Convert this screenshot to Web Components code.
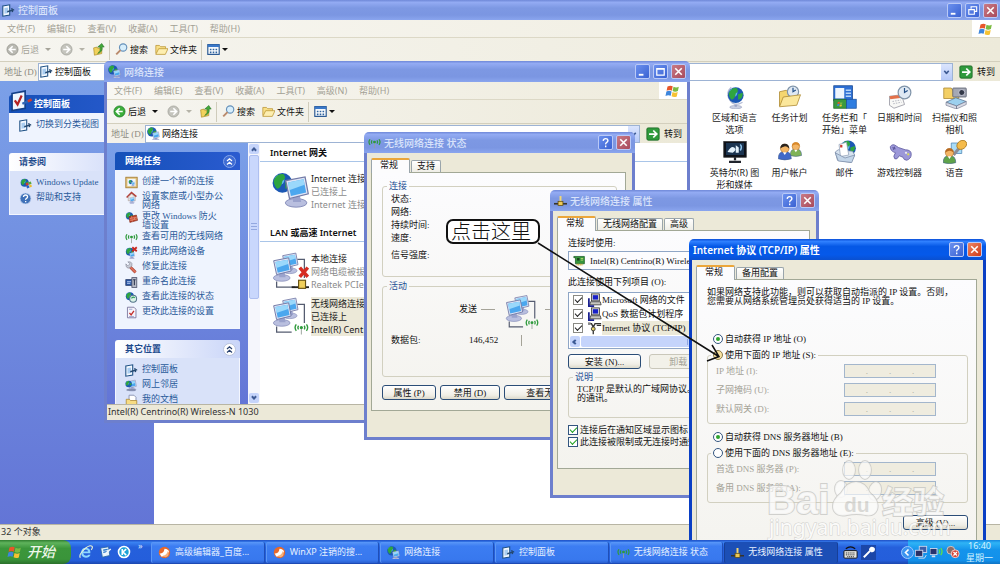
<!DOCTYPE html>
<html lang="zh-CN">
<head>
<meta charset="utf-8">
<meta name="viewport" content="width=device-width, initial-scale=1">
<title>控制面板</title>
<style>
  html, body { margin: 0; height: 100%; }
  body {
    display: flex; flex-direction: column; overflow: hidden; background: #fff; color: #111;
    --song: "Liberation Serif", "Noto Sans CJK SC", serif;
    --ui: "Noto Sans", "Noto Sans CJK SC", sans-serif;
    font: 9px/12px var(--ui);
  }
  main { flex: 1; min-height: 0; position: relative; overflow: hidden; display: flex; }
  main > xp-window:first-child { flex: 1; }
  .float { position: absolute; }
  #network { left: 104px; top: 61px; width: 586px; height: 362px; }
  #status { left: 364px; top: 132px; width: 271px; height: 308px; }
  #props { left: 550px; top: 190px; width: 269px; height: 308px; }
  #tcpip { left: 689px; top: 239px; width: 297px; height: 332px; }
</style>
</head>
<body>
<main>
  <xp-window caption="控制面板" icon="cpanel" buttons="min restore close" maximized>
    <xp-menubar items="文件(F) 编辑(E) 查看(V) 收藏(A) 工具(T) 帮助(H)"></xp-menubar>
    <xp-toolbar noback></xp-toolbar>
    <xp-address value="控制面板" icon="cpanel"></xp-address>
    <xp-explorer>
      <task-panel slot="side" caption="控制面板" primary badge="cpbig">
        <task-link icon="cpanel">切换到分类视图</task-link>
      </task-panel>
      <task-panel slot="side" caption="请参阅">
        <task-link icon="update">Windows Update</task-link>
        <task-link icon="help">帮助和支持</task-link>
      </task-panel>
      <icon-grid>
        <grid-item icon="region">区域和语言<br>选项</grid-item>
        <grid-item icon="sched">任务计划</grid-item>
        <grid-item icon="startmenu">任务栏和「<br>开始」菜单</grid-item>
        <grid-item icon="datetime">日期和时间</grid-item>
        <grid-item icon="scanner">扫描仪和照<br>相机</grid-item>
        <grid-item icon="intel">英特尔(R) 图<br>形和媒体</grid-item>
        <grid-item icon="users">用户帐户</grid-item>
        <grid-item icon="mail">邮件</grid-item>
        <grid-item icon="game">游戏控制器</grid-item>
        <grid-item icon="speech">语音</grid-item>
      </icon-grid>
    </xp-explorer>
    <xp-status>32 个对象</xp-status>
  </xp-window>

  <xp-window id="network" class="float" caption="网络连接" icon="net" buttons="min max close">
    <xp-menubar items="文件(F) 编辑(E) 查看(V) 收藏(A) 工具(T) 高级(N) 帮助(H)"></xp-menubar>
    <xp-toolbar></xp-toolbar>
    <xp-address value="网络连接" icon="net"></xp-address>
    <xp-explorer scroll>
      <task-panel slot="side" caption="网络任务" primary collapsible>
        <task-link icon="newconn">创建一个新的连接</task-link>
        <task-link icon="house">设置家庭或小型办公网络</task-link>
        <task-link icon="firewall">更改 Windows 防火<br>墙设置</task-link>
        <task-link icon="wifi">查看可用的无线网络</task-link>
        <task-link icon="disable">禁用此网络设备</task-link>
        <task-link icon="repair">修复此连接</task-link>
        <task-link icon="rename">重命名此连接</task-link>
        <task-link icon="viewstat">查看此连接的状态</task-link>
        <task-link icon="settings">更改此连接的设置</task-link>
      </task-panel>
      <task-panel slot="side" caption="其它位置" collapsible>
        <task-link icon="cpanel">控制面板</task-link>
        <task-link icon="places">网上邻居</task-link>
        <task-link icon="docs">我的文档</task-link>
      </task-panel>
      <conn-group caption="Internet 网关">
        <conn-item icon="gateway" name="Internet 连接" state="已连接上" device="Internet 连接"></conn-item>
      </conn-group>
      <conn-group caption="LAN 或高速 Internet">
        <conn-item icon="lan" name="本地连接" state="网络电缆被拔" device="Realtek PCIe"></conn-item>
        <conn-item icon="wlan" name="无线网络连接" state="已连接上" device="Intel(R) Cent" selected></conn-item>
      </conn-group>
    </xp-explorer>
    <xp-status>Intel(R) Centrino(R) Wireless-N 1030</xp-status>
  </xp-window>

  <xp-window id="status" class="float" caption="无线网络连接 状态" icon="wifi" buttons="help close">
    <status-page></status-page>
  </xp-window>

  <xp-window id="props" class="float" caption="无线网络连接 属性" icon="cable" buttons="help close">
    <props-page></props-page>
  </xp-window>

  <xp-window id="tcpip" class="float" caption="Internet 协议 (TCP/IP) 属性" buttons="help close" active>
    <tcpip-page></tcpip-page>
  </xp-window>

  <call-out>点击这里</call-out>
  <site-mark></site-mark>
</main>
<xp-taskbar></xp-taskbar>

<script>
/* ---------- icon drawings ---------- */
const globe = (x, y, r) => `<circle cx="${x}" cy="${y}" r="${r}" fill="#1c58b4"/><circle cx="${x - r * .3}" cy="${y - r * .3}" r="${r * .5}" fill="#5fb8ea"/><path d="M${x - r * .9} ${y - r * .2}q${r * .3} ${-r * .8} ${r} ${-r * .7}q${r * .4} ${r * .4} ${-r * .1} ${r * .7}q${-r * .1} ${r * .7} ${-r * .5} ${r * .8}q${-r * .3} ${-r * .2} ${-r * .4} ${-r * .8}zM${x + r * .3} ${y - r * .1}l${r * .6} ${-r * .2}q0 ${r * .8} ${-r * .6} ${r * .9}z" fill="#2fa53f"/>`;
const monitor = (x, y, s) => `<g transform="translate(${x} ${y}) scale(${s})"><ellipse cx="7" cy="15" rx="6" ry="2.4" fill="#b9bfdf" stroke="#8087b5" stroke-width=".5"/><path d="M5 11l4-.5.8 4h-4.5z" fill="#9aa2cc"/><path d="M1.200 2.600 12 .5l1.800 9.500-10.500 2.600z" fill="#dfe4f5" stroke="#727aa6" stroke-width=".7"/><path d="M2.500 3.600 11.200 1.900l1.400 7.300-8.500 2z" fill="#4ba7ee"/><path d="M2.500 3.600 11.200 1.900l.5 3-8.600 3z" fill="#9ad8fb"/></g>`;
const waves = (x, y, s, c = '#2f9a3c') => `<g transform="translate(${x} ${y}) scale(${s})" fill="none" stroke="${c}" stroke-width="1.500"><path d="M5 5.500q-1.500 2 0 4M2.500 4q-2.600 3.500 0 7M11 5.500q1.500 2 0 4M13.500 4q2.600 3.500 0 7"/><circle cx="8" cy="7.500" r="1" fill="${c}"/><path d="M8 9v6" stroke="#98a29a" stroke-width="1"/></g>`;
const person = (x, y, s, h, b) => `<g transform="translate(${x} ${y}) scale(${s})"><path d="M1 16q0-8 7-8t7 8q-7 2.500-14 0z" fill="${b}" stroke="#3c5a8c" stroke-width=".6"/><circle cx="8" cy="5" r="4.600" fill="#f3b565" stroke="#a76b25" stroke-width=".6"/><path d="M3.300 5q0-5 4.700-5t4.700 5q-2.500-2.500-5-2.200T3.300 5z" fill="${h}"/><path d="M6 9l2 3 2-3z" fill="#fff"/></g>`;
const flag = `<path d="M2.500 3.500q3-1.600 5.200-.2l-.9 4.400q-2.400-1.500-5.200.1z" fill="#e8562a"/><path d="M8.500 3.700q2.600 1.500 5.300.1l-.9 4.300q-2.800 1.400-5.300 0z" fill="#7cbb42"/><path d="M1.400 8.600q2.700-1.500 5.200-.1l-.9 4.300q-2.500-1.400-5.200.2z" fill="#3e86dc"/><path d="M7.500 9q2.500 1.500 5.200.1l-.9 4.300q-2.700 1.300-5.200-.1z" fill="#f6c233"/>`;
const panel = `<path d="M1 2.500 9.500 1v12.500L1 15z" fill="#f4f9ff" stroke="#1c4f83" stroke-width="1.300"/><path d="M3 5 7.500 4.200v7L3 12z" fill="#a9cdf0"/><path d="M6.500 9.500 15 7M12 5l1 5" stroke="#24486f" stroke-width="1.700" fill="none"/>`;
const circle = (f, s) => `<circle cx="8" cy="8" r="6.800" fill="${f}" stroke="${s}"/>`;
const clock = (x, y, r) => `<circle cx="${x}" cy="${y}" r="${r}" fill="#dfe9f4" stroke="#7f93a8" stroke-width="1.600"/><path d="M${x} ${y - r * .7}v${r * .7}l${r * .5} ${-r * .3}" stroke="#234f86" stroke-width="1.600" fill="none"/>`;
const pcPair = monitor(8, 0, 1.05) + monitor(0, 4, 1.2);
const arrowL = (c) => `<path d="M8.200 4 4.200 8l4 4M4.500 8h7.500" stroke="${c}" stroke-width="2" fill="none"/>`;
const arrowR = (c) => `<path d="M7.800 4l4 4-4 4M11.500 8H4" stroke="${c}" stroke-width="2" fill="none"/>`;
const ICONS = {
  cpanel: [16, panel],
  cpbig: [16, `<path d="M1.500 2.500 11 .8v12.500L1.500 15z" fill="#eef6ff" stroke="#123f88" stroke-width="1.200"/><path d="M3.500 7.500l2 3 3-6.500" stroke="#b42222" stroke-width="1.600" fill="none"/><path d="M9 10l6.500-3" stroke="#2d63b3" stroke-width="1.800"/><path d="M13 8.200l2.700-1.300" stroke="#cf3d2e" stroke-width="1.800"/>`],
  net: [16, globe(6, 6, 5.8) + monitor(6, 5.500, .68)],
  back: [16, circle('#3cae3a', '#1e7d25') + arrowL('#fff')],
  backoff: [16, circle('#b9b9b2', '#94948c') + arrowL('#fff')],
  fwd: [16, circle('#c4c4bd', '#a3a39b') + arrowR('#fff')],
  up: [16, `<path d="M2 6l4-1 1 1.500 5-1V13l-9 2z" fill="#f1d25c" stroke="#a98722" stroke-width=".8"/><path d="M7 13q4-3 3-8H7l5-4.500L15 5h-2.500q1 6-5.500 8z" fill="#42a83a" stroke="#1d6a1d" stroke-width=".6"/>`],
  search: [16, `<circle cx="10" cy="5.500" r="4.500" fill="#d7eefb" stroke="#6590b9" stroke-width="1.400"/><path d="M6.800 8.800 1.500 14" stroke="#b98a6c" stroke-width="2.400"/>`],
  folder: [16, `<path d="M1 13V3h4.500L7 4.500h6v2.500" fill="#f8df86" stroke="#b8912d" stroke-width=".9"/><path d="M1 14 4.500 7H16l-3.300 7z" fill="#fdeeb0" stroke="#b8912d" stroke-width=".9"/>`],
  views: [16, `<rect x="1" y="2" width="14" height="12" fill="#fff" stroke="#20528f" stroke-width="1.400"/><path d="M1 3.500h14" stroke="#3a78c8" stroke-width="3"/><path d="M3.500 8h2M7 8h2M10.500 8h2M3.500 11.500h2M7 11.500h2M10.500 11.500h2" stroke="#2e64a0" stroke-width="2"/>`],
  go: [16, `<rect x="1" y="1" width="14" height="14" rx="1.500" fill="#2f9a3c" stroke="#1e6a28"/><path d="M3.500 8H12M8.300 4l4 4-4 4" stroke="#fff" stroke-width="2" fill="none"/>`],
  flag: [16, flag],
  update: [16, globe(7, 7, 5) + `<path d="M8 8l3-1.200 1 2.700-3 1.200z" fill="#d23a2a"/><path d="M11.500 6.500l3-.9 1 2.600-3 1.300z" fill="#59a740"/><path d="M9 11.500l3-1.200 1 2.700-3 1.200z" fill="#2b62c4"/><path d="M12.500 10l2.500-.9 1 2.600-2.600 1.200z" fill="#eebb2e"/>`],
  help: [16, `<circle cx="8" cy="8" r="6.800" fill="#3f71b8" stroke="#cfdef6"/><path d="M5.500 6.200q.2-2.500 2.600-2.500t2.500 2.200q0 1.300-1.300 2T8.200 9.700M8.200 11v1.700" stroke="#fff" stroke-width="1.600" fill="none"/>`],
  newconn: [16, `<rect x="1" y="1.500" width="14" height="13" fill="#e3c47e" stroke="#a1782d"/><rect x="3" y="3.500" width="10" height="9" fill="#eef6fb"/>` + globe(7, 7.500, 2.500) + monitor(7.500, 7, .33)],
  house: [16, `<path d="M2 8l6-6 6 5" stroke="#b3413a" stroke-width="2" fill="none"/><path d="M4 7.500 8 3.700l4.500 3.500V12H4z" fill="#f7f0ea" stroke="#8f837c" stroke-width=".6"/>` + monitor(5, 7, .5)],
  firewall: [16, globe(5.500, 6, 4.500) + `<path d="M5 7l9-2 1.500 6.500L6 14z" fill="#c1442b" stroke="#79200f" stroke-width=".7"/><path d="M5.500 9.500l9.500-2M6 11.500l9.500-2M8 6.500l.5 2.200M11.500 8.300l.5 2M8.500 11l.5 2" stroke="#f0b09a" stroke-width=".7"/>`],
  wifi: [16, waves(0, 0, 1)],
  disable: [16, globe(6, 7, 5) + monitor(5, 7.500, .5) + `<path d="M9 1.500l5.500 5M14.500 1.500 9 6.500" stroke="#c8281e" stroke-width="2.200"/>`],
  repair: [16, `<path d="M5.500 6.500 13 14" stroke="#a84739" stroke-width="3.600"/><path d="M5.500 6.500 13 14" stroke="#e0705a" stroke-width="2"/><path d="M1 3.500 3.500 6 6 3.500 3.500 1q4-.8 5 2T6.500 8 1.500 7z" fill="#c9ccd6" stroke="#6c7083" stroke-width=".6"/>`],
  rename: [16, `<rect x="1" y="4.500" width="9" height="7" fill="#2a57a6" stroke="#253a68"/><path d="M2.500 7h5M2.500 9h4" stroke="#cfe2ff"/><rect x="8.500" y="2" width="6" height="12" fill="#b8bcc9" stroke="#4a5068"/><path d="M10 4.500h3M11.500 4.500v7" stroke="#27304c" stroke-width="1.300"/>`],
  viewstat: [16, globe(6, 6.500, 5) + `<circle cx="10" cy="9.500" r="4.300" fill="#d9f1e6" stroke="#55768b" stroke-width="1.300"/><path d="M8 9q2-2.500 4-.5" stroke="#2e9b59" stroke-width="1.600" fill="none"/>`],
  settings: [16, `<path d="M3 1.500h8l2.500 2.500v10.500H3z" fill="#f6f4fb" stroke="#6f6a94"/><path d="M5.500 8.500l2 2.500 3.500-5" stroke="#c22e2a" stroke-width="1.600" fill="none"/><path d="M5 4h4M5 13h6" stroke="#8d9ac7"/>`],
  places: [16, monitor(3, 1, .8) + globe(4.500, 6, 4) + `<path d="M2 13.500h11" stroke="#6d7a99" stroke-width="1.600"/>`],
  docs: [16, `<path d="M5 1.500h6l2.500 2.500v8H5z" fill="#fff" stroke="#7c86a8"/><path d="M1.500 14V6.500h4l1.200 1.500h7.800v6z" fill="#f7dc83" stroke="#a8842c" stroke-width=".9"/>`],
  cable: [16, `<path d="M8 2.500v7" stroke="#f2d774" stroke-width="2.400"/><path d="M0 12h16" stroke="#37332a" stroke-width="2"/><rect x="5" y="9" width="6" height="5" fill="#efca56" stroke="#5c4a12" stroke-width=".9"/>`],
  card: [16, `<path d="M1 3h13v9H3V4.500H1z" fill="#36963c" stroke="#185a22" stroke-width=".9"/><rect x="5" y="5" width="3" height="3" fill="#173c1b"/><path d="M9.500 5.500h3M9.500 7.500h3" stroke="#c9e07a"/><path d="M5 12v2M7 12v2M9 12v2M11 12v2" stroke="#d6b540" stroke-width="1.300"/>`],
  client: [16, `<rect x="4" y="1" width="9" height="8" fill="#d6d5d0" stroke="#333" stroke-width=".9"/><rect x="5.500" y="2.500" width="6" height="5" fill="#1820c8"/><path d="M3 10h11l1 3.500H2z" fill="#c8c7c1" stroke="#333" stroke-width=".9"/><path d="M1 6v9h6" stroke="#1a2090" stroke-width="2" fill="none"/>`],
  proto: [16, `<path d="M1 3h3l2 4 2-4h7" stroke="#333" stroke-width="1.600" fill="none"/><circle cx="6" cy="9" r="2.200" fill="#e7d367" stroke="#333"/><path d="M6 11v4M10 5h5" stroke="#333" stroke-width="1.500"/><rect x="0" y="1.500" width="3" height="3" fill="#888"/>`],
  ie: [16, `<path d="M13 9.500H4.800q.2 2.700 3.200 2.800 2 0 2.700-1.200h2.500Q11.800 14.500 8 14.500 2.500 14 2.500 8.500T8 3q5.500.3 5 6.500zM5 7.300h5.500Q10 5 7.800 5T5 7.300z" fill="#8fd6ff"/><path d="M1.500 14.500Q-.5 11 6 5t9-3.300q1 1-1 3.800" stroke="#e9f2d4" stroke-width="1.300" fill="none"/>`],
  desk: [16, `<path d="M3 3.500 12 2l1.500 10L5 14z" fill="#e6f3fb" stroke="#2a67a8"/><path d="M6 6l5-1M6 8.500l4-1" stroke="#2d7acb" stroke-width="1.500"/><path d="M7 11.500l7.500-7" stroke="#f2f7fb" stroke-width="1.600"/>`],
  kball: [16, `<circle cx="8" cy="8" r="6.300" fill="#1da3d8" stroke="#fff" stroke-width="1.800"/><path d="M6 4.500v7M10.500 4.700 6.800 8l3.700 3.500" stroke="#fff" stroke-width="1.800" fill="none"/>`],
  browser: [16, `<circle cx="8" cy="8" r="7" fill="#e8682a"/><path d="M2 9q5 1 6-5.500 5 .5 5.500 3.500Q10 13.500 4 13z" fill="#fff"/><path d="M6 12q5-1 6-6 2.500 4-.5 7-3 2-5.500-1z" fill="#f6b27e"/>`],
  keyboard: [16, `<rect x="1" y="6" width="14" height="8" rx="1" fill="#e6e6e2" stroke="#111"/><path d="M3 8.500h10M3 10.500h10M4.500 12.500h7" stroke="#222" stroke-dasharray="1.200 .8"/><path d="M3 4q5-4 10 0" stroke="#111" fill="none" stroke-width="1.200"/>`],
  pen: [16, `<path d="M3 13 10 6" stroke="#fff" stroke-width="2.200"/><path d="M9 3.500q2-2.500 4.500-1t.5 4.500l-2.500 1L8.500 5z" fill="#fff"/>`],
  traynet: [16, `<rect x="6" y="1.500" width="8.500" height="7" fill="#3c5ea8" stroke="#cfd7ec"/><rect x="1.500" y="6" width="8.500" height="7" fill="#2a2f63" stroke="#cfd7ec"/><path d="M5 15h7l2-3.500" stroke="#e3e3ee" fill="none"/>`],
  traywifi: [16, `<rect x="0" y="4" width="8" height="7" fill="#27336d" stroke="#d5dcee"/><path d="M2 13h4" stroke="#d5dcee" stroke-width="2"/><path d="M10 5q2 2.500 0 5M12.300 3.500q3 4 0 8" stroke="#5fe04a" stroke-width="1.500" fill="none"/>`],
  traybad: [16, `<circle cx="5.500" cy="6" r="4.500" fill="#8b6c66" stroke="#d8ccc8"/><circle cx="10.500" cy="10" r="4.500" fill="#d4473a" stroke="#f3d9d3"/><path d="M8.500 8l4 4M12.500 8l-4 4" stroke="#fff" stroke-width="1.400"/>`],
  /* 32-unit drawings */
  region: [32, `<ellipse cx="17" cy="29.500" rx="8" ry="2.300" fill="#c9cfe2" stroke="#8a92b4" stroke-width=".7"/><path d="M17 25v4" stroke="#9ba3c4" stroke-width="3"/><path d="M11 3q-8 7-2 17t17 3" stroke="#b7bed6" stroke-width="1.800" fill="none"/>` + globe(17, 13.500, 10.5)],
  sched: [32, `<path d="M2 28V9l9-2 3 3h10v6" fill="#f5d66f" stroke="#a9842b"/>` + clock(20, 9, 7.500) + `<path d="M2 29l5-13 23-3-5 14z" fill="#fbe79b" stroke="#a9842b"/>`],
  startmenu: [32, `<rect x="1" y="1" width="25" height="20" fill="#2d6fd4" stroke="#16458f"/><rect x="3" y="4" width="12" height="14" fill="#eef5fd"/><path d="M17 7h7M17 11h7M17 15h7" stroke="#b3d3f7" stroke-width="2"/><rect x="1" y="19" width="17" height="12" fill="#3b9a3f" stroke="#1f6427"/><rect x="18" y="19" width="13" height="12" fill="#2f7de0" stroke="#1a50a0"/><g transform="translate(5 21) scale(.55)">${flag}</g>`],
  datetime: [32, `<path d="M2 15l16-2 4 13-14 5-6-4z" fill="#f8f8f6" stroke="#8f8f9b"/><path d="M2 15l16-2 1 4-16 2z" fill="#e3714a"/><path d="M6 22l11-2M7 25l11-2" stroke="#b8bac4" stroke-dasharray="2 1.500" stroke-width="1.500"/>` + clock(22, 10, 8.500)],
  scanner: [32, `<path d="M1 18V4h10l2 3h8v11z" fill="#f3cf65" stroke="#a9842b"/><rect x="13" y="4" width="18" height="12" rx="1" fill="#a4a8b4" stroke="#53586a"/><circle cx="25" cy="10" r="4" fill="#333948" stroke="#dde"/><path d="M4 23l13-6 14 5-13 6z" fill="#9cd0ee" stroke="#5b7390"/><path d="M4 23v4l14 5v-4zM18 28v4l13-6v-4z" fill="#d8dbe6" stroke="#6c7288" stroke-width=".8"/>`],
  intel: [32, `<rect x="1" y="2" width="30" height="21" fill="#0d1118" stroke="#333"/><rect x="4" y="4" width="24" height="16" fill="#1b3450"/><path d="M6 16q5-9 9-6t-2 7M17 17V7l4 3v7z" fill="#e4f1fa"/><path d="M23 6q3 3 0 8" stroke="#8fc4ec" stroke-width="2" fill="none"/><path d="M16 23v4M8 29h16" stroke="#20242c" stroke-width="3"/>`],
  users: [32, person(15, 3, 1.100, '#d9892a', '#7fb356') + person(-1, 5, 1.250, '#2b241e', '#4169c8')],
  mail: [32, globe(20, 11, 10.5) + `<path d="M3 16l4-3 19 2 3 5-5 10-18-3z" fill="#d7e3f0" stroke="#7b8ca8"/><path d="M8 6l10-3 3 17-11 2z" fill="#fff" stroke="#93a1b8"/><rect x="9.500" y="6.500" width="3" height="3.500" fill="#c93c33"/><path d="M3 17l13 7 13-4-4 10-18-2z" fill="#c3d5e8" stroke="#7b8ca8"/>`],
  game: [32, `<path d="M3 9q3-5 8-1l3 2 9 3q8 0 8 6t-6 8q-4 0-5-4l-5-2q-3 6-6 4-3-3 1-8-7-2-7-8z" fill="#9c98d8" stroke="#5a569c"/><circle cx="24" cy="17" r="1.500" fill="#eee"/><circle cx="27" cy="19" r="1.500" fill="#dfe04c"/><path d="M6 10l4 2M9 9l-2 4" stroke="#5a569c" stroke-width="1.500"/>`],
  speech: [32, `<path d="M11 4h14v14H11z" fill="#a9dcf7" stroke="#4c84b4"/><path d="M14 20l9-11" stroke="#8b8d98" stroke-width="4"/><ellipse cx="25" cy="6.500" rx="7" ry="5.500" transform="rotate(-35 25 6.500)" fill="#f5bb4a" stroke="#a77518"/>` + person(-1, 11, 1.200, '#b66a22', '#5fa34a')],
  gateway: [32, globe(9, 9, 8.5) + monitor(10, 3, 1.55)],
  lan: [32, pcPair + `<path d="M22 6h6v16M4 25v5h16" stroke="#555c70" stroke-width="1.100" fill="none"/><path d="M17 30h15" stroke="#222" stroke-width="1.600"/><rect x="23" y="24" width="6" height="7" fill="#f0cf5c" stroke="#6a5313"/><path d="M24 13l7 8M31 13l-7 8" stroke="#d62c22" stroke-width="3"/>`],
  wlan: [32, pcPair + `<path d="M22 6h6v16M4 25v5h13" stroke="#555c70" stroke-width="1.100" fill="none"/>` + waves(19, 20, .8)],
};

/* ---------- element helper ---------- */
const BASE = `*{box-sizing:border-box;margin:0}:host{display:block;box-sizing:border-box}button,input{font:inherit;color:inherit;padding:0;border:0;background:none;border-radius:0;min-width:0}`;
function element(name, css, html) {
  customElements.define(name, class extends HTMLElement {
    constructor() {
      super();
      this.attachShadow({ mode: 'open' });
    }
    connectedCallback() {
      const t = document.createElement('template');
      const a = (k, d = '') => this.getAttribute(k) ?? d;
      t.innerHTML = `<style>${BASE}${css}</style>` + (typeof html === 'function' ? html(a, this) : html);
      this.shadowRoot.replaceChildren(t.content.cloneNode(true));
    }
  });
}

element('xp-icon', `:host{display:block;flex:none;width:13px;height:13px}svg{display:block;width:100%;height:100%}`, a => {
  const [n, d] = ICONS[a('name')];
  return `<svg viewBox="0 0 ${n} ${n}" aria-hidden="true">${d}</svg>`;
});

/* ---------- window frame ---------- */
const CAPS = {
  min: ['最小化', '<path d="M3 10.500h5" stroke="#fff" stroke-width="2"/>'],
  max: ['最大化', '<path d="M3 4h8v7H3zM3 4.500h8" stroke="#fff" fill="none" stroke-width="1.300"/>'],
  restore: ['还原', '<path d="M5.500 5V3h6v5H9M3 6h6v5H3z" stroke="#fff" fill="none" stroke-width="1.200"/>'],
  help: ['帮助', '<path d="M4.500 5.200q.3-2.400 2.600-2.400t2.500 2q0 1.300-1.300 2T7.200 9M7.200 10.300v1.700" stroke="#fff" fill="none" stroke-width="1.500"/>'],
  close: ['关闭', '<path d="M3.500 3.500l7 7M10.500 3.500l-7 7" stroke="#fff" stroke-width="1.700"/>'],
};
element('xp-window', `
  :host{display:flex;flex-direction:column;min-width:0;--edge:#6d7fcd;--bar:linear-gradient(#6f88d8,#93abf3 12%,#7d98e3 40%,#7b96e2 75%,#8aa5ee)}
  :host([active]){--edge:#0a3fc4;--bar:linear-gradient(#0b4fd8,#2f80ff 12%,#0558e6 35%,#0559ea 75%,#0a50d0)}
  header{display:flex;align-items:center;gap:3px;height:21px;padding:0 4px;background:var(--bar);color:#d9e3fb;border-radius:5px 5px 0 0;flex:none}
  :host([maximized]) header{height:20px;border-radius:0;padding:0 2px}
  h2{font:500 10px/14px var(--ui);flex:1;white-space:nowrap}
  :host([active]) h2{color:#fff;font-weight:600}
  .caps{display:flex;gap:3px}
  button{width:15px;height:15px;border-radius:2px;border:1px solid #b9c9f7;background:linear-gradient(135deg,#6b90ee,#3a62d2);display:block}
  .close{background:linear-gradient(135deg,#c97a85,#a84a5c)}
  :host([active]) .close{background:linear-gradient(135deg,#ee8664,#cf3a17)}
  svg{display:block;width:13px;height:13px}
  .body{flex:1;min-height:0;display:flex;flex-direction:column;border:3px solid var(--edge);border-top:0;background:#ece9d8}
  :host([maximized]) .body{border:0}`,
  a => `<header>${a('icon') ? `<xp-icon name="${a('icon')}"></xp-icon>` : ''}<h2>${a('caption')}</h2><div class="caps">${
    a('buttons').split(' ').map(b => `<button class="${b}" aria-label="${CAPS[b][0]}"><svg viewBox="0 0 14 14">${CAPS[b][1]}</svg></button>`).join('')
  }</div></header><div class="body"><slot></slot></div>`);

element('xp-menubar', `
  :host{flex:none}
  nav{display:flex;height:18px;align-items:center;padding-left:7px;gap:12px;background:linear-gradient(90deg,#f8f7f3,#eeebdc);border-bottom:1px solid #dcd8c6;color:#a3a195}
  button{white-space:nowrap}
  .logo{margin-left:auto;width:28px;height:17px;background:#fff;display:grid;place-items:center}
  xp-icon{width:16px;height:16px}`,
  a => `<nav>${a('items').split(' ').map(m => `<button>${m}</button>`).join('')}<span class="logo"><xp-icon name="flag"></xp-icon></span></nav>`);

element('xp-toolbar', `
  :host{flex:none}
  div{display:flex;align-items:center;height:24px;padding-left:6px;background:linear-gradient(90deg,#f6f5f0,#edeada);border-bottom:1px solid #d3cfbd}
  button{display:flex;align-items:center;gap:2px;height:18px;margin-right:7px;white-space:nowrap}
  .first{margin-right:9px}
  :host([noback]) .first{color:#a6a49a}
  i{border:3px solid transparent;border-top-color:currentColor;border-bottom:0;margin:0 0 0 4px}
  .dim{color:#b5b3a8}
  hr{width:1px;height:20px;border:0;background:#cfccbb;margin:0 5px 0 -3px}
  .views i{margin-left:0}`,
  (a, el) => `<div>
    <button class="first"><xp-icon name="${el.hasAttribute('noback') ? 'backoff' : 'back'}"></xp-icon>后退<i></i></button>
    <button class="dim" aria-label="前进"><xp-icon name="fwd"></xp-icon><i></i></button>
    <button aria-label="向上"><xp-icon name="up"></xp-icon></button><hr>
    <button><xp-icon name="search"></xp-icon>搜索</button>
    <button><xp-icon name="folder"></xp-icon>文件夹</button><hr>
    <button class="views" aria-label="查看方式"><xp-icon name="views"></xp-icon><i></i></button></div>`);

element('xp-address', `
  :host{flex:none}
  .row{display:flex;height:19px;align-items:center;padding:0 5px 0 4px;background:linear-gradient(90deg,#f3f1ea,#ece9d8)}
  label{color:#8d8b80;font-family:var(--song);white-space:nowrap;width:34px}
  .box{flex:1;display:flex;align-items:center;gap:2px;height:18px;background:#fff;border:1px solid #9db3d4;padding-left:1px}
  input{flex:1;height:14px}
  .drop{width:11px;height:16px;background:linear-gradient(#dbe5fd,#b6c9f8);display:grid;place-items:center}
  .drop i{width:5px;height:5px;border:solid #3d5a94;border-width:0 2px 2px 0;transform:rotate(45deg) scale(.8)}
  .go{display:flex;align-items:center;gap:4px;margin-left:6px}
  .go xp-icon{width:14px;height:14px}`,
  a => `<div class="row"><label for="addr">地址 (D)</label><div class="box"><xp-icon name="${a('icon')}"></xp-icon><input id="addr" value="${a('value')}"><button class="drop" aria-label="展开"><i></i></button></div><button class="go"><xp-icon name="go"></xp-icon>转到</button></div>`);

element('xp-explorer', `
  :host{flex:1;min-height:0;display:flex;background:#fff;overflow:hidden}
  aside{width:154px;flex:none;padding:14px 9px 0;background:linear-gradient(#7ba0e8,#6375d6);display:flex;flex-direction:column;gap:11px;overflow:hidden}
  :host([scroll]) aside{width:141px;padding:9px 8px 0}
  section{flex:1;min-width:0;overflow:hidden}
  .bar{display:none}
  :host([scroll]) .bar{display:flex;flex-direction:column;width:12px;flex:none;background:#f5f6fc;padding:1px}
  .bar button{height:10px;background:#c5d4fb;border-radius:2px;display:grid;place-items:center;flex:none}
  .bar i{width:4px;height:4px;border:solid #3d5a94;border-width:2px 0 0 2px;transform:translateY(1px) rotate(45deg)}
  .bar .dn i{transform:translateY(-1px) rotate(225deg)}
  .thumb{flex:3;background:#c9d7fc;border:1px solid #aebff0;border-radius:2px;display:grid;place-items:center;color:#8ea4dc;margin-top:1px}
  .rest{flex:2}`,
  `<aside><slot name="side"></slot></aside>
   <div class="bar"><button aria-label="向上滚动"><i></i></button><span class="thumb"><svg width="6" height="7"><path d="M0 .5h6M0 3.500h6M0 6.500h6" stroke="#93a8e0"/></svg></span><span class="rest"></span><button class="dn" aria-label="向下滚动"><i></i></button></div>
   <section><slot></slot></section>`);

element('task-panel', `
  :host{flex:none;position:relative}
  header{display:flex;align-items:center;justify-content:space-between;height:18px;padding:0 4px 0 10px;border-radius:3px 3px 0 0;background:linear-gradient(90deg,#fff,#c9d5f8);color:#1c4a8c}
  :host([primary]) header{background:linear-gradient(90deg,#1550b8,#2a5bd0);color:#fff}
  :host([badge]) header{padding-left:25px}
  h3{font:700 9px/12px var(--song)}
  .badge{position:absolute;left:1px;top:-5px;width:22px;height:22px}
  .ring{width:13px;height:13px;border-radius:50%;background:#fff;color:#27406f;border:1px solid #b9c3dc}
  :host([primary]) .ring{background:#3f6cd4;color:#fff;border-color:#86a5e8}
  .ring svg{display:block;width:11px;height:11px}
  .list{display:flex;flex-direction:column;gap:2px;padding:6px 4px 9px 9px;background:#d9e2f9;border:1px solid #f3f6fe;border-top:0}
  :host([primary]) .list{background:#eff4fe}`,
  (a, el) => `<header>${a('badge') ? `<xp-icon class="badge" name="${a('badge')}"></xp-icon>` : ''}<h3>${a('caption')}</h3>${el.hasAttribute('collapsible') ? '<button class="ring" aria-label="折叠"><svg viewBox="0 0 11 11"><path d="M3 5l2.500-2.300L8 5M3 8.500l2.500-2.300L8 8.500" stroke="currentColor" stroke-width="1.200" fill="none"/></svg></button>' : ''}</header><div class="list"><slot></slot></div>`);

element('task-link', `
  a{display:flex;gap:4px;min-height:13px;align-items:flex-start;color:#2a5a9a;text-decoration:none;font:9px/9px var(--song)}
  span{padding-top:1px;margin-bottom:-1px;max-width:84px}`,
  a => `<a href="#"><xp-icon name="${a('icon')}"></xp-icon><span><slot></slot></span></a>`);

element('icon-grid', `:host{display:grid;grid-template-columns:repeat(5,55px);justify-content:end;grid-auto-rows:55px;padding:4px 18px 0 0}`, `<slot></slot>`);
element('grid-item', `
  a{display:flex;flex-direction:column;align-items:center;gap:3px;color:#222;text-decoration:none;text-align:center;white-space:nowrap}
  xp-icon{width:24px;height:24px}`,
  a => `<a href="#"><xp-icon name="${a('icon')}"></xp-icon><span><slot></slot></span></a>`);

element('conn-group', `
  h3{font:600 9px/12px var(--ui);padding:4px 0 2px 10px;border-bottom:1px solid #a9c5e8;margin-bottom:10px}
  .list{display:flex;flex-direction:column;gap:6px;padding:0 0 12px 12px}`,
  a => `<h3>${a('caption')}</h3><div class="list"><slot></slot></div>`);
element('conn-item', `
  a{display:flex;gap:2px;color:#222;text-decoration:none;white-space:nowrap}
  xp-icon{width:37px;height:38px}
  span{display:block;color:#8b8b8b;line-height:13px}
  .name{color:#222}
  :host([selected]) span{color:#222}
  :host([selected]) .text{background:#ece9d8}`,
  a => `<a href="#"><xp-icon name="${a('icon')}"></xp-icon><div class="text"><span class="name">${a('name')}</span><span>${a('state')}</span><span>${a('device')}</span></div></a>`);

element('xp-status', `:host{flex:none;height:16px;border-top:1px solid #b8b5a4;padding:1px 1px 0;background:#ece9d8;color:#333}`, `<slot></slot>`);

/* ---------- dialog controls ---------- */
element('xp-tabs', `
  :host{flex:1;min-height:0;display:flex;flex-direction:column;padding:5px 6px 26px 4px;font:9px/12px var(--song)}
  :host([open]) {padding-bottom:0}
  nav{display:flex;align-items:flex-end;height:14px;position:relative}
  button{height:12px;padding:0 5px;border:1px solid #9aa5ab;border-bottom:0;border-radius:2px 2px 0 0;background:linear-gradient(#fff,#efeee6);line-height:11px;margin-left:1px}
  button:first-child{height:15px;margin:0 0 -1px;padding:0 11px 2px 8px;border-top:2px solid #eba63a;background:#fcfcfd}
  .page{flex:1;border:1px solid #a2a896;background:linear-gradient(#fcfcfe,#f4f3ee);padding:8px 8px 0 10px;min-height:0}`,
  a => `<nav>${a('tabs').split(' ').map(t => `<button>${t}</button>`).join('')}</nav><div class="page"><slot></slot></div>`);

element('xp-group', `
  fieldset{border:1px solid #d2d0c0;border-radius:3px;padding:0 8px;min-width:0}
  legend{padding:0 2px;margin-left:-4px;color:#1d4f94;line-height:10px}
  :host([choice]) legend{color:#111;line-height:12px;margin-left:-5px}`,
  a => `<fieldset><legend>${a('caption')}<slot name="legend"></slot></legend><slot></slot></fieldset>`);

element('xp-button', `
  button{display:block;width:100%;height:15px;border:1px solid #2b4d77;border-radius:3px;background:linear-gradient(#fff,#f0eee6 70%,#dcd9cb);line-height:12px;white-space:nowrap}
  :host([off]) button{border-color:#c9c7ba;background:#f2f1e9;color:#a3a195}`,
  (a, el) => `<button ${el.hasAttribute('off') ? 'disabled' : ''}><slot></slot></button>`);

element('xp-choice', `
  label{display:flex;align-items:center;gap:2px;height:12px;line-height:12px;white-space:nowrap}
  input{appearance:none;width:10px;height:10px;flex:none;border:1px solid #33557f;background:#fff;display:grid;place-items:center}
  input[type=radio]{border-radius:50%}
  input[type=radio]:checked::after{content:"";width:4px;height:4px;border-radius:50%;background:#2fa52f}
  input[type=checkbox]:checked::after{content:"";width:6px;height:3px;border:solid #21a121;border-width:0 0 1px 1px;transform:translateY(-1px) rotate(-45deg)}
  :host([plain]) input::after{border-color:#222!important}
  :host([plain]) input{border-color:#8a8a84}
  :host([hot]) input{background:#f9e2a0;border-color:#8a7a4a}`,
  (a, el) => `<label><input type="${a('type', 'radio')}" ${el.hasAttribute('on') ? 'checked' : ''}><slot></slot></label>`);

element('ip-field', `
  .row{display:flex;justify-content:space-between;align-items:center;height:14px;color:#a5a398;margin-right:23px}
  .ip{display:flex;width:92px;height:14px;border:1px solid #a3b6cc;background:#efecdf;line-height:12px}
  input{flex:1;width:0;height:12px}`,
  a => `<div class="row"><label for="a">${a('caption')}</label><div class="ip"><input id="a" disabled>.<input disabled aria-label="2">.<input disabled aria-label="3">.<input disabled aria-label="4"></div></div>`);

/* ---------- dialog pages ---------- */
const PAGE = `:host{flex:1;min-height:0;display:flex;flex-direction:column}`;
element('status-page', PAGE + `
  dl{padding:2px 0 14px}
  dt{height:13px;line-height:13px}
  dt:last-child{margin-top:4px}
  .second{margin-top:4px}
  .send{display:flex;align-items:center;height:34px;padding:0 0 0 68px;margin-top:4px}
  .send hr{width:14px;border:0;border-top:1px solid #a5a398;margin:0 0 6px 4px}
  .send span{margin-bottom:6px}
  .send xp-icon{width:34px;height:34px;margin:0 2px 0 10px}
  .pack{display:grid;grid-template-columns:78px 52px 1fr;align-items:center;height:14px;margin:4px 0 29px}
  .pack i{width:1px;height:11px;background:#a5a398}
  .row{display:grid;grid-template-columns:54px 60px 1fr;gap:4px;margin-top:8px}`,
  `<xp-tabs tabs="常规 支持">
    <xp-group caption="连接"><dl><dt>状态:</dt><dt>网络:</dt><dt>持续时间:</dt><dt>速度:</dt><dt>信号强度:</dt></dl></xp-group>
    <xp-group class="second" caption="活动">
      <div class="send"><span>发送</span><hr><xp-icon name="wlan"></xp-icon><hr></div>
      <div class="pack"><span>数据包:</span><span>146,452</span><i></i></div>
    </xp-group>
    <div class="row"><xp-button>属性 (P)</xp-button><xp-button>禁用 (D)</xp-button><xp-button>查看无线网络 (V)</xp-button></div>
  </xp-tabs>`);

element('props-page', PAGE + `
  p{line-height:9px;white-space:nowrap}
  .dev{display:flex;align-items:center;gap:4px;height:19px;margin:3px 0 8px;padding-left:4px;border:1px solid #8fa6c6;background:#fcfcfe;white-space:nowrap;overflow:hidden}
  .items{margin-top:5px;border:1px solid #8fa6c6;background:#fff;overflow:hidden}
  .items>div{display:grid;grid-template-columns:10px 14px 1fr;gap:5px;align-items:center;height:14px;padding-left:4px;white-space:nowrap}
  .items .name{margin-left:-5px;line-height:14px}
  .items .on .name{background:#ece9d8}
  .items xp-icon{width:14px;height:14px}
  .items .bar{display:flex;gap:1px;height:13px;padding:1px;align-items:stretch}
  .bar button{width:10px;background:#c5d4fb;border-radius:2px;display:grid;place-items:center}
  .bar i{width:4px;height:4px;border:solid #3d5a94;border-width:0 0 2px 2px;transform:rotate(45deg)}
  .bar span{flex:1;background:#c5d4fb;border-radius:2px;display:grid;place-items:center}
  .row{display:grid;grid-template-columns:73px 73px 1fr;gap:8px;margin:5px 0 3px}
  .desc{padding:3px 0 14px}
  .checks{margin-top:6px}`,
  `<xp-tabs tabs="常规 无线网络配置 高级">
    <p>连接时使用:</p>
    <div class="dev"><xp-icon name="card"></xp-icon>Intel(R) Centrino(R) Wireless</div>
    <p>此连接使用下列项目 (O):</p>
    <div class="items">
      <div><xp-choice type="checkbox" plain on></xp-choice><xp-icon name="client"></xp-icon><span class="name">Microsoft 网络的文件</span></div>
      <div><xp-choice type="checkbox" plain on></xp-choice><xp-icon name="client"></xp-icon><span class="name">QoS 数据包计划程序</span></div>
      <div class="on"><xp-choice type="checkbox" plain on></xp-choice><xp-icon name="proto"></xp-icon><span class="name">Internet 协议 (TCP/IP)</span></div>
      <div class="bar"><button aria-label="向左滚动"><i></i></button><span><svg width="7" height="6"><path d="M.5 0v6M3.500 0v6M6.500 0v6" stroke="#93a8e0"/></svg></span></div>
    </div>
    <div class="row"><xp-button>安装 (N)...</xp-button><xp-button off>卸载 (U)</xp-button></div>
    <xp-group caption="说明"><div class="desc"><p>TCP/IP 是默认的广域网协议。</p><p>的通讯。</p></div></xp-group>
    <div class="checks"><xp-choice type="checkbox" on>连接后在通知区域显示图标 (W)</xp-choice><xp-choice type="checkbox" on>此连接被限制或无连接时通知</xp-choice></div>
  </xp-tabs>`);

element('tcpip-page', PAGE + `
  p{line-height:9px;white-space:nowrap}
  .auto{padding-left:6px;margin:27px 0 4px}
  .dns{padding-left:6px;margin:7px 0 4px}
  .rows{display:grid;gap:5px;padding:3px 0 7px}
  .adv{width:65px;margin:12px 0 0 auto}`,
  `<xp-tabs tabs="常规 备用配置" open>
    <p>如果网络支持此功能，则可以获取自动指派的 IP 设置。否则，</p>
    <p>您需要从网络系统管理员处获得适当的 IP 设置。</p>
    <xp-choice class="auto" on>自动获得 IP 地址 (O)</xp-choice>
    <xp-group choice><xp-choice slot="legend" hot>使用下面的 IP 地址 (S):</xp-choice>
      <div class="rows"><ip-field caption="IP 地址 (I):"></ip-field><ip-field caption="子网掩码 (U):"></ip-field><ip-field caption="默认网关 (D):"></ip-field></div></xp-group>
    <xp-choice class="dns" on>自动获得 DNS 服务器地址 (B)</xp-choice>
    <xp-group choice><xp-choice slot="legend">使用下面的 DNS 服务器地址 (E):</xp-choice>
      <div class="rows"><ip-field caption="首选 DNS 服务器 (P):"></ip-field><ip-field caption="备用 DNS 服务器 (A):"></ip-field></div></xp-group>
    <xp-button class="adv">高级 (V)...</xp-button>
  </xp-tabs>`);

/* ---------- annotation and watermark ---------- */
element('call-out', `
  :host{position:absolute;left:446px;top:219px;width:280px;height:150px;pointer-events:none}
  span{display:block;width:94px;height:25px;border:2px solid #111;border-radius:7px;background:#fff;font:300 20px/20px "Noto Sans CJK SC",sans-serif;padding-left:3px;color:#111;white-space:nowrap}
  svg{position:absolute;inset:0;width:100%;height:100%}`,
  `<span><slot></slot></span><svg viewBox="0 0 280 150"><path d="M92 24 272 137M266 126l7 11.500-12 4.500" stroke="#111" stroke-width="1.500" fill="none"/></svg>`);

element('site-mark', `
  :host{position:absolute;left:766px;top:456px;width:190px;height:86px;pointer-events:none}
  svg{display:block;width:100%;height:100%;opacity:.75}`,
  `<svg viewBox="0 0 190 86" fill="#fdfdfd" fill-opacity=".85" stroke="#c4c4c1" stroke-width="1.800" paint-order="stroke">
    <text x="1" y="58" font-family="Liberation Sans" font-weight="700" font-size="40">Bai</text>
    <ellipse cx="75" cy="33" rx="6" ry="8"/><ellipse cx="83" cy="14" rx="6" ry="9"/><ellipse cx="99" cy="14" rx="6" ry="9"/><ellipse cx="109" cy="35" rx="6" ry="9" transform="rotate(12 109 35)"/>
    <path d="M90 26q9 0 14 11 10 8 7 17-3 7-12 5-8-2-18 0-9 2-13-4-4-9 7-18 6-11 15-11z"/>
    <text x="78" y="56" font-family="Liberation Sans" font-weight="700" font-size="21" fill="#c9c9c6" stroke="none">du</text>
    <text x="116" y="57" font-family="Noto Sans CJK SC" font-weight="700" font-size="31">经验</text>
    <text x="3" y="79" font-family="Noto Sans" font-size="21" fill-opacity="1" stroke-width="1">jingyan.baidu.com</text>
  </svg>`);

/* ---------- taskbar ---------- */
element('task-button', `
  :host{flex:1;min-width:0}
  button{display:flex;align-items:center;gap:4px;width:100%;height:21px;padding-left:6px;border-radius:2px;color:#e6f0ff;background:linear-gradient(#5a98f8,#3c7df2 20%,#3878ee 85%,#2a5fd0);border-left:1px solid #5c97f5;border-right:1px solid #1f4fb8;white-space:nowrap;overflow:hidden}
  :host([on]) button{background:#1c4fb6;border-color:#173f97}`,
  a => `<button><xp-icon name="${a('icon')}"></xp-icon><slot></slot></button>`);

element('xp-taskbar', `
  :host{flex:none;height:24px;display:flex;align-items:center;background:linear-gradient(#1f4fc4,#3a82f2 10%,#2560dc 30%,#245edb 85%,#1c47ae);font:9px/12px var(--ui);position:relative}
  .start{display:flex;align-items:center;gap:4px;width:71px;height:24px;padding-left:7px;background:linear-gradient(#2f7d2f,#5fb35c 12%,#3b963b 35%,#3a943a 80%,#2b702b);border-radius:0 8px 8px 0;color:#eef7ea;font:italic 500 14px/20px var(--ui)}
  .start xp-icon{width:16px;height:16px}
  .quick{display:flex;align-items:center;gap:5px;width:80px;padding-left:8px;color:#dce8ff}
  .quick xp-icon{width:14px;height:14px}
  .quick b{margin:-12px 0 0 2px;font-weight:400}
  .tasks{flex:1;display:flex;gap:1px;min-width:0}
  .lang{display:flex;gap:3px;padding:0 5px;width:70px}
  .lang xp-icon{width:15px;height:15px}
  .lang xp-icon + xp-icon{background:#1b46a8}
  .tray{position:relative;display:flex;align-items:center;gap:2px;width:92px;height:24px;padding-left:6px;background:linear-gradient(#1485e0,#2fb4f6 12%,#1494ec 40%,#1290ea 85%,#0f74c4);color:#d2f3ff}
  .tray xp-icon{width:14px;height:14px}
  .arrow{position:absolute;left:-7px;top:6px;width:13px;height:13px;border-radius:50%;background:#3a93f0;border:1px solid #9ccaff}
  .arrow svg{display:block;width:11px;height:11px}
  time{display:block;line-height:12px;margin-left:4px;text-align:center;font-family:var(--ui);white-space:nowrap}`,
  `<button class="start"><xp-icon name="flag"></xp-icon>开始</button>
   <div class="quick"><xp-icon name="ie"></xp-icon><xp-icon name="desk"></xp-icon><xp-icon name="kball"></xp-icon><b>»</b></div>
   <div class="tasks">
     <task-button icon="browser">高级编辑器_百度...</task-button>
     <task-button icon="browser">WinXP 注销的搜...</task-button>
     <task-button icon="net">网络连接</task-button>
     <task-button icon="cpanel">控制面板</task-button>
     <task-button icon="wifi">无线网络连接 状态</task-button>
     <task-button icon="cable" on>无线网络连接 属性</task-button>
   </div>
   <div class="lang"><xp-icon name="keyboard"></xp-icon><xp-icon name="pen"></xp-icon></div>
   <div class="tray"><button class="arrow" aria-label="显示图标"><svg viewBox="0 0 11 11"><path d="M6.500 2.500l-3 3 3 3" stroke="#fff" stroke-width="1.600" fill="none"/></svg></button>
     <xp-icon name="traynet"></xp-icon><xp-icon name="traywifi"></xp-icon><xp-icon name="traybad"></xp-icon>
     <time>16:40<br>星期一</time></div>`);
</script>
</body>
</html>
